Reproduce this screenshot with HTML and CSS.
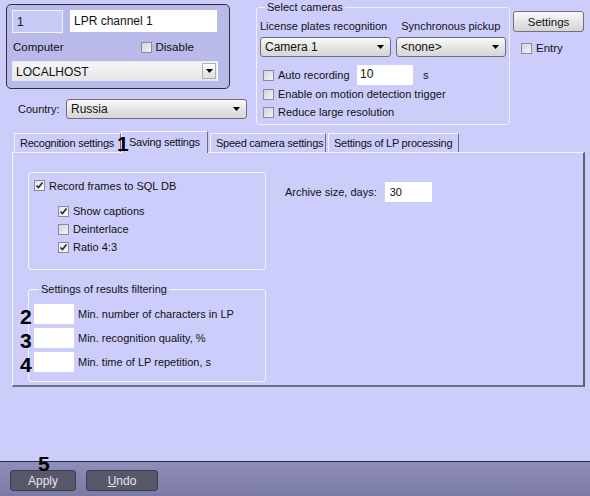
FILE: index.html
```html
<!DOCTYPE html>
<html>
<head>
<meta charset="utf-8">
<link rel="stylesheet" href="styles.css">
</head>
<body>
<div class="top">
  <div class="leftcol">
    <div class="chanbox">
      <div class="r1">
        <div class="idfield">1</div>
        <div class="namefield">LPR channel 1</div>
      </div>
      <div class="r2">
        <span class="complabel">Computer</span>
        <span class="chk"><span class="box"></span>Disable</span>
      </div>
      <div class="combo2">LOCALHOST<span class="ddbtn"><svg width="7" height="4" viewBox="0 0 7 4"><path d="M0 0H7L3.5 4Z" fill="#000"/></svg></span></div>
    </div>
    <div class="country">
      <span class="ctlabel">Country:</span>
      <div class="combo ctcombo">Russia<svg class="arr" width="7" height="4" viewBox="0 0 7 4"><path d="M0 0H7L3.5 4Z" fill="#000"/></svg></div>
    </div>
  </div>
  <fieldset class="cams">
    <legend>Select cameras</legend>
    <div class="camlabels"><span>License plates recognition</span><span class="sync">Synchronous pickup</span></div>
    <div class="camcombos">
      <div class="combo cam1">Camera 1<svg class="arr" width="7" height="4" viewBox="0 0 7 4"><path d="M0 0H7L3.5 4Z" fill="#000"/></svg></div>
      <div class="combo cam2">&lt;none&gt;<svg class="arr" width="7" height="4" viewBox="0 0 7 4"><path d="M0 0H7L3.5 4Z" fill="#000"/></svg></div>
    </div>
    <div class="autorow"><span class="chk autochk"><span class="box"></span>Auto recording</span><div class="field tenfield">10</div><span class="sunit">s</span></div>
    <div class="chkrow"><span class="chk"><span class="box"></span>Enable on motion detection trigger</span></div>
    <div class="chkrow"><span class="chk"><span class="box"></span>Reduce large resolution</span></div>
  </fieldset>
  <div class="rightcol">
    <div class="btn settingsbtn">Settings</div>
    <span class="chk entry"><span class="box"></span>Entry</span>
  </div>
</div>

<div class="tabs">
  <div class="tab t1">Recognition settings</div>
  <div class="tab active t2">Saving settings</div>
  <div class="tab t3">Speed camera settings</div>
  <div class="tab t4">Settings of LP processing</div>
  <span class="badge b1">1</span>
</div>

<div class="panel">
  <div class="prow">
    <div class="group g1">
      <div class="chkrow"><span class="chk"><span class="box on"><svg width="9" height="9" viewBox="0 0 9 9"><path d="M1.5 4.5L3.5 6.5L7.5 1.5" stroke="#2a2a2a" stroke-width="1.6" fill="none"/></svg></span>Record frames to SQL DB</span></div>
      <div class="subs">
        <div class="chkrow"><span class="chk"><span class="box on"><svg width="9" height="9" viewBox="0 0 9 9"><path d="M1.5 4.5L3.5 6.5L7.5 1.5" stroke="#2a2a2a" stroke-width="1.6" fill="none"/></svg></span>Show captions</span></div>
        <div class="chkrow"><span class="chk"><span class="box"></span>Deinterlace</span></div>
        <div class="chkrow"><span class="chk"><span class="box on"><svg width="9" height="9" viewBox="0 0 9 9"><path d="M1.5 4.5L3.5 6.5L7.5 1.5" stroke="#2a2a2a" stroke-width="1.6" fill="none"/></svg></span>Ratio 4:3</span></div>
      </div>
    </div>
    <div class="archive"><span>Archive size, days:</span><div class="field arfield">30</div></div>
  </div>
  <fieldset class="group g2">
    <legend>Settings of results filtering</legend>
    <div class="frow"><span class="badge bn">2</span><div class="field ffield"></div><span>Min. number of characters in LP</span></div>
    <div class="frow"><span class="badge bn">3</span><div class="field ffield"></div><span>Min. recognition quality, %</span></div>
    <div class="frow"><span class="badge bn">4</span><div class="field ffield"></div><span>Min. time of LP repetition, s</span></div>
  </fieldset>
</div>

<div class="spacer"></div>

<div class="bottom">
  <div class="dbtn apply">Apply<span class="badge b5">5</span></div>
  <div class="dbtn undo"><u>U</u>ndo</div>
</div>
</body>
</html>
```

FILE: styles.css
```css
* { box-sizing: border-box; }
html, body { margin: 0; padding: 0; }
body {
  width: 590px;
  height: 496px;
  overflow: hidden;
  background: #cdcdfb;
  font-family: "Liberation Sans", Arial, sans-serif;
  font-size: 11px;
  color: #111;
  display: flex;
  flex-direction: column;
  white-space: nowrap;
}
.top { display: flex; align-items: flex-start; height: 126px; flex: none; }
.leftcol { width: 250px; padding-top: 4px; flex: none; }
.chanbox {
  margin-left: 6px;
  width: 224px;
  height: 85px;
  border: 1px solid #2e2e3e;
  border-radius: 5px;
  background: #b9b9ea;
  padding: 5px 0 0 5px;
}
.r1 { display: flex; height: 23px; }
.idfield {
  width: 51px; height: 23px;
  background: #c9c9f5;
  border: 1px solid #f2f2ff;
  padding: 4px 0 0 4px;
  font-size: 12px;
}
.namefield {
  margin-left: 7px;
  width: 147px; height: 22px;
  background: #fff;
  padding: 4px 0 0 4px;
  font-size: 12px;
}
.r2 { display: flex; align-items: center; height: 24px; margin-top: 2px; font-size: 11.5px; }
.complabel { margin-left: 1px; }
.r2 .chk { margin-left: 77px; }
.combo2 {
  margin-top: 2px;
  width: 206px; height: 20px;
  background: linear-gradient(#f6f6f6, #e6e6ea);
  border: 1px solid #e8e8f4;
  border-right-color: #fff;
  padding: 3px 0 0 3px;
  font-size: 12px;
  display: flex;
}
.ddbtn {
  margin-left: auto;
  margin-right: 1px;
  margin-top: -2px;
  width: 14px; height: 16px;
  background: linear-gradient(#ffffff, #dcdcdc);
  border: 1px solid #b0b0b0;
  display: flex; align-items: center; justify-content: center;
}
.country { display: flex; align-items: center; margin-top: 9px; height: 21px; }
.ctlabel { margin-left: 18px; width: 48px; }
.combo {
  height: 20px;
  border: 1px solid #6e6e7a;
  border-radius: 3px;
  background: linear-gradient(#fafafa, #e2e2e2 60%, #d6d6d6);
  padding: 0 0 0 4px;
  display: flex; align-items: center;
  font-size: 12px;
}
.combo .arr { margin-left: auto; margin-right: 6px; }
.ctcombo { width: 181px; }

.cams {
  margin: 1px 0 0 6px;
  width: 254px;
  height: 124px;
  border: 1px solid #f0f0ff;
  border-radius: 3px;
  padding: 0 0 0 3px;
  flex: none;
}
.cams legend { padding: 0 2px; margin-left: 5px; line-height: 13px; font-size: 11px; }
.camlabels { display: flex; margin-top: 6px; line-height: 13px; font-size: 11px; }
.sync { margin-left: 14px; }
.camcombos { display: flex; margin-top: 4px; }
.cam1 { width: 131px; }
.cam2 { width: 110px; margin-left: 5px; }
.autorow { display: flex; align-items: center; margin-top: 8px; height: 20px; }
.chkrow { display: flex; align-items: center; height: 18px; }
.cams .chkrow, .cams .autorow { padding-left: 3px; }
.autochk { width: 94px; }
.chk { display: inline-flex; align-items: center; }
.box {
  width: 11px; height: 11px;
  border: 1px solid #8a8a9c;
  background: linear-gradient(135deg, #d2d2d8, #f6f6f8);
  margin-right: 4px;
  display: inline-flex; align-items: center; justify-content: center;
  flex: none;
}
.box.on { background: linear-gradient(135deg, #e4e4ea, #fbfbfb); }
.field { background: #fff; height: 20px; flex: none; }
.tenfield { width: 56px; padding: 2px 0 0 3px; font-size: 12px; }
.sunit { margin-left: 10px; }

.rightcol { margin-left: 3px; padding-top: 11px; display: flex; flex-direction: column; }
.btn {
  width: 71px; height: 21px;
  border: 1px solid #707080;
  border-radius: 3px;
  background: linear-gradient(#fbfbfb, #e4e4e4 55%, #d4d4d4);
  display: flex; align-items: center; justify-content: center;
  font-size: 11.5px;
}
.entry { margin-left: 8px; margin-top: 10px; font-size: 11.5px; }

.tabs { display: flex; align-items: flex-end; margin-left: 14px; margin-top: 5px; height: 22px; position: relative; z-index: 2; flex: none; }
.tab {
  height: 19px;
  border-top: 1px solid #f4f4ff;
  border-left: 1px solid #f4f4ff;
  border-right: 1px solid #6e6e7e;
  padding: 3px 0 0 5px;
  margin-bottom: 1px;
  letter-spacing: -0.25px;
  overflow: hidden;
}
.t1 { width: 107px; }
.t2 { width: 87px; padding-left: 7px; }
.t3 { width: 116px; margin-left: 2px; }
.t4 { width: 131px; margin-left: 2px; }
.tab.active {
  height: 22px;
  margin-bottom: 0;
  padding-top: 4px;
  background: #cdcdfb;
}
.badge { position: absolute; font-weight: bold; font-size: 21px; line-height: 1; color: #000; }
.b1 { left: 103px; top: 2px; }

.panel {
  margin-left: 12px;
  width: 573px;
  height: 235px;
  margin-top: -1px;
  flex: none;
  border-top: 1px solid #f4f4ff;
  border-left: 1px solid #f4f4ff;
  border-right: 2px solid #5e5e6e;
  border-bottom: 2px solid #6e6e80;
  padding: 19px 0 0 15px;
}
.prow { display: flex; align-items: flex-start; }
.group { border: 1px solid #f4f4ff; border-radius: 3px; }
.g1 { width: 238px; height: 98px; padding: 6px 0 0 5px; flex: none; }
.g1 .chkrow { height: 13px; }
.subs { padding-left: 24px; margin-top: 10px; }
.subs .chkrow { height: 18px; }
.archive { display: flex; align-items: center; margin-left: 19px; margin-top: 10px; }
.arfield { width: 47px; margin-left: 8px; padding: 4px 0 0 5px; }
.g2 {
  margin: 13px 0 0 0;
  width: 238px;
  height: 99px;
  padding: 8px 0 0 5px;
}
.g2 legend { padding: 0 2px; margin-left: 5px; line-height: 13px; }
.frow { display: flex; align-items: center; position: relative; height: 20px; margin-bottom: 4px; }
.ffield { width: 40px; margin-right: 4px; }
.bn { left: -14px; top: 2px; }

.spacer { flex: 1; }
.bottom {
  height: 35px;
  flex: none;
  border-top: 1px solid #2c2c48;
  background: linear-gradient(#8e8eb8, #7a7aa6);
  display: flex;
  padding: 8px 0 0 10px;
}
.dbtn {
  height: 21px;
  border: 1px solid #3c3c4c;
  border-radius: 3px;
  background: #58586a;
  color: #e4e4f0;
  display: flex; align-items: center; justify-content: center;
  font-size: 12px;
  position: relative;
}
.apply { width: 66px; }
.undo { width: 72px; margin-left: 10px; }
.b5 { left: 27px; top: -18px; }
```
